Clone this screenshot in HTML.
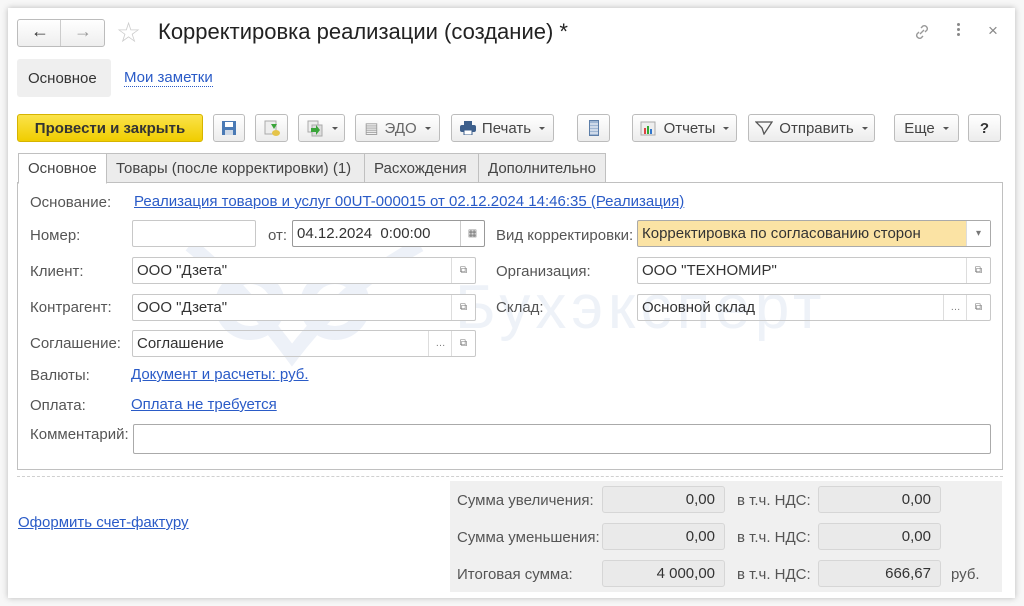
<!DOCTYPE html>
<html><head><meta charset="utf-8"><style>
*{box-sizing:border-box;margin:0;padding:0}
body{width:1024px;height:606px;background:#f7f7f7;font-family:"Liberation Sans",sans-serif;font-size:15px;color:#404040;position:relative;overflow:hidden}
.a{position:absolute}
.win{left:8px;top:8px;width:1007px;height:590px;background:#fff;box-shadow:0 0 6px rgba(0,0,0,.25)}
.btn{position:absolute;top:114px;height:28px;border:1px solid #bcbcbc;border-radius:3px;background:linear-gradient(#fff,#ececec);display:flex;align-items:center;justify-content:center;color:#444;font-size:15px;gap:6px}
.dd::after{content:"";border:3px solid transparent;border-top:3px solid #555;margin-left:2px;margin-top:4px}
.lbl{position:absolute;color:#555;font-size:15px;line-height:16px;padding-top:2px}
.lnk{position:absolute;color:#2a5bc7;text-decoration:underline;font-size:15px;line-height:16px;padding-top:1px}
.inp{position:absolute;height:27px;border:1px solid #c8c8c8;border-radius:2px;background:#fff;font-size:15px;color:#333;padding:5px 4px;line-height:16px}
.ib{position:absolute;top:0;width:24px;height:25px;border-left:1px solid #ddd;display:flex;align-items:center;justify-content:center;font-size:10px;color:#777}
.tab{position:absolute;top:153px;height:30px;border:1px solid #c0c0c0;background:#ececec;padding:6px 9px;font-size:15px;color:#444;white-space:nowrap}
.g{position:absolute;height:27px;border:1px solid #d6d6d6;border-radius:3px;background:#eaeaea;text-align:right;padding:5px 9px;line-height:16px;color:#333}
</style></head><body>
<div class="a win"></div>
<div class="a" style="left:17px;top:19px;width:88px;height:28px;border:1px solid #bcbcbc;border-radius:3px;background:linear-gradient(#fff,#eee)"></div>
<div class="a" style="left:60px;top:20px;width:1px;height:26px;background:#ccc"></div>
<div class="a" style="left:31px;top:21px;font-size:18px;color:#333;font-weight:bold">←</div>
<div class="a" style="left:74px;top:21px;font-size:18px;color:#999">→</div>
<div class="a" style="left:116px;top:16px;font-size:28px;color:#ccc">☆</div>
<div class="a" style="left:158px;top:19px;font-size:22px;color:#222">Корректировка реализации (создание) *</div>
<svg class="a" style="left:912px;top:22px" width="20" height="20" viewBox="0 0 20 20" fill="none" stroke="#999" stroke-width="1.4"><path d="M8 12l4-4M9 6l2-2a3 3 0 0 1 4 4l-2 2M11 14l-2 2a3 3 0 0 1-4-4l2-2"/></svg>
<div class="a" style="left:957px;top:23px;width:3px;height:3px;background:#888;border-radius:2px;box-shadow:0 5px #888,0 10px #888"></div>
<div class="a" style="left:988px;top:21px;font-size:17px;color:#888">×</div>
<div class="a" style="left:17px;top:59px;width:94px;height:38px;background:#efefef;border-radius:3px"></div>
<div class="a" style="left:28px;top:70px;color:#333">Основное</div>
<div class="lnk" style="left:124px;top:69px;text-decoration:none;border-bottom:1px dotted #2a5bc7">Мои заметки</div>
<div class="btn" style="left:17px;width:186px;background:linear-gradient(#fbe34a,#f0cd00);border-color:#d6b400;color:#333;font-weight:bold;font-size:15px">Провести и закрыть</div>
<div class="btn" style="left:213px;width:32px"><svg width="16" height="16"><rect x="1" y="1" width="14" height="14" fill="#4a7ab5"/><rect x="4" y="2" width="8" height="5" fill="#fff"/><rect x="4" y="10" width="8" height="5" fill="#cfd9e6"/></svg></div>
<div class="btn" style="left:255px;width:33px"><svg width="18" height="18"><rect x="2" y="2" width="11" height="13" fill="#eee" stroke="#aaa"/><path d="M8 5h6l-3 5z" fill="#3aa53a"/><ellipse cx="13" cy="14" rx="4" ry="3" fill="#e5c44a"/></svg></div>
<div class="btn dd" style="left:298px;width:47px"><svg width="18" height="18"><rect x="2" y="2" width="10" height="11" fill="#eee" stroke="#aaa"/><rect x="6" y="6" width="10" height="11" fill="#ddd" stroke="#aaa"/><path d="M5 9l5 0 0-3 4 5-4 5 0-3-5 0z" fill="#3aa53a"/></svg></div>
<div class="btn dd" style="left:355px;width:85px;color:#666"><span style="color:#999">▤</span>ЭДО</div>
<div class="btn dd" style="left:451px;width:103px"><svg width="16" height="14"><rect x="4" y="0" width="8" height="4" fill="#3d5f8c"/><rect x="0" y="4" width="16" height="7" rx="2" fill="#3d5f8c"/><rect x="4" y="9" width="8" height="5" fill="#fff" stroke="#3d5f8c"/></svg>Печать</div>
<div class="btn" style="left:577px;width:33px"><svg width="10" height="16"><rect x="0.5" y="0.5" width="9" height="15" fill="#9fb6d3" stroke="#5d7ea8"/><path d="M1 4h8M1 7h8M1 10h8M1 13h8" stroke="#fff"/></svg></div>
<div class="btn dd" style="left:632px;width:105px"><svg width="18" height="16"><rect x="1" y="2" width="14" height="13" fill="#eee" stroke="#aaa"/><rect x="4" y="8" width="2" height="6" fill="#d44"/><rect x="7" y="6" width="2" height="8" fill="#3a3"/><rect x="10" y="9" width="2" height="5" fill="#37c"/></svg>Отчеты</div>
<div class="btn dd" style="left:748px;width:127px"><svg width="18" height="14"><path d="M1 1L17 1 9 13 7 7z" fill="none" stroke="#555" stroke-width="1.3"/></svg>Отправить</div>
<div class="btn dd" style="left:894px;width:65px">Еще</div>
<div class="btn" style="left:968px;width:33px;font-weight:bold;color:#333">?</div>
<div class="a" style="left:17px;top:182px;width:986px;height:288px;border:1px solid #c0c0c0"></div>
<div class="tab" style="left:18px;width:89px;background:#fff;border-bottom-color:#fff;height:31px">Основное</div>
<div class="tab" style="left:106px;width:259px">Товары (после корректировки) (1)</div>
<div class="tab" style="left:364px;width:115px">Расхождения</div>
<div class="tab" style="left:478px;width:128px">Дополнительно</div>
<svg class="a" style="left:180px;top:225px" width="250" height="150" viewBox="0 0 250 150" fill="none" stroke="#edf1f8" stroke-width="14"><circle cx="70" cy="80" r="28"/><circle cx="155" cy="80" r="28"/><path d="M10 20Q60 60 112 130Q165 60 240 20"/></svg>
<div class="a" style="left:455px;top:272px;font-size:62px;letter-spacing:5px;color:#eef2f8">Бухэксперт</div>
<div class="lbl" style="left:30px;top:193px">Основание:</div>
<div class="lnk" style="left:134px;top:193px">Реализация товаров и услуг 00UT-000015 от 02.12.2024 14:46:35 (Реализация)</div>
<div class="lbl" style="left:30px;top:226px">Номер:</div>
<div class="inp" style="left:132px;top:220px;width:124px"></div>
<div class="lbl" style="left:268px;top:226px">от:</div>
<div class="inp" style="left:292px;top:220px;width:193px;border-color:#999">04.12.2024&nbsp; 0:00:00<div class="ib" style="right:0;border-color:#ccc">▦</div></div>
<div class="lbl" style="left:496px;top:226px">Вид корректировки:</div>
<div class="inp" style="left:637px;top:220px;width:354px;background:#fbe3a4;border-color:#aaa">Корректировка по согласованию сторон<div class="ib" style="right:0;background:#fff">▾</div></div>
<div class="lbl" style="left:30px;top:262px">Клиент:</div>
<div class="inp" style="left:132px;top:257px;width:344px">ООО "Дзета"<div class="ib" style="right:0">⧉</div></div>
<div class="lbl" style="left:496px;top:262px">Организация:</div>
<div class="inp" style="left:637px;top:257px;width:354px">ООО "ТЕХНОМИР"<div class="ib" style="right:0">⧉</div></div>
<div class="lbl" style="left:30px;top:298px">Контрагент:</div>
<div class="inp" style="left:132px;top:294px;width:344px">ООО "Дзета"<div class="ib" style="right:0">⧉</div></div>
<div class="lbl" style="left:496px;top:298px">Склад:</div>
<div class="inp" style="left:637px;top:294px;width:354px;background:transparent">Основной склад<div class="ib" style="right:23px">…</div><div class="ib" style="right:0">⧉</div></div>
<div class="lbl" style="left:30px;top:334px">Соглашение:</div>
<div class="inp" style="left:132px;top:330px;width:344px;background:transparent">Соглашение<div class="ib" style="right:23px">…</div><div class="ib" style="right:0">⧉</div></div>
<div class="lbl" style="left:30px;top:366px">Валюты:</div>
<div class="lnk" style="left:131px;top:366px">Документ и расчеты: руб.</div>
<div class="lbl" style="left:30px;top:396px">Оплата:</div>
<div class="lnk" style="left:131px;top:396px">Оплата не требуется</div>
<div class="lbl" style="left:30px;top:425px">Комментарий:</div>
<div class="inp" style="left:133px;top:424px;width:858px;height:30px;border-color:#aaa"></div>
<div class="a" style="left:17px;top:476px;width:986px;border-top:1px dashed #d0d0d0"></div>
<div class="lnk" style="left:18px;top:514px">Оформить счет-фактуру</div>
<div class="a" style="left:450px;top:481px;width:552px;height:111px;background:#f0f0f0"></div>
<div class="lbl" style="left:457px;top:491px">Сумма увеличения:</div>
<div class="lbl" style="left:457px;top:528px">Сумма уменьшения:</div>
<div class="lbl" style="left:457px;top:565px">Итоговая сумма:</div>
<div class="g" style="left:602px;top:486px;width:123px">0,00</div>
<div class="g" style="left:602px;top:523px;width:123px">0,00</div>
<div class="g" style="left:602px;top:560px;width:123px">4 000,00</div>
<div class="lbl" style="left:737px;top:491px">в т.ч. НДС:</div>
<div class="lbl" style="left:737px;top:528px">в т.ч. НДС:</div>
<div class="lbl" style="left:737px;top:565px">в т.ч. НДС:</div>
<div class="g" style="left:818px;top:486px;width:123px">0,00</div>
<div class="g" style="left:818px;top:523px;width:123px">0,00</div>
<div class="g" style="left:818px;top:560px;width:123px">666,67</div>
<div class="lbl" style="left:951px;top:565px">руб.</div>
</body></html>
